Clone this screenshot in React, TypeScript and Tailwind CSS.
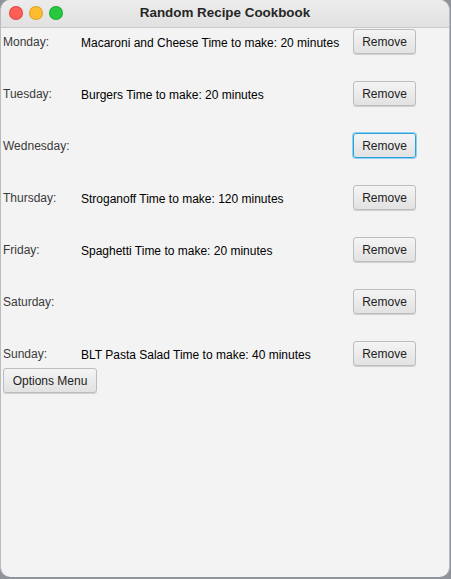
import React from "react";

const rows: { day: string; recipe: string; focused?: boolean }[] = [
  { day: "Monday:", recipe: "Macaroni and Cheese Time to make: 20 minutes" },
  { day: "Tuesday:", recipe: "Burgers Time to make: 20 minutes" },
  { day: "Wednesday:", recipe: "", focused: true },
  { day: "Thursday:", recipe: "Stroganoff Time to make: 120 minutes" },
  { day: "Friday:", recipe: "Spaghetti Time to make: 20 minutes" },
  { day: "Saturday:", recipe: "" },
  { day: "Sunday:", recipe: "BLT Pasta Salad Time to make: 40 minutes" },
];

function FxButton({ label, focused, className }: { label: string; focused?: boolean; className?: string }) {
  return (
    <div
      className={
        "flex h-[25px] items-center justify-center rounded-[3px] border bg-gradient-to-b from-[#f4f4f4] to-[#e2e2e2] text-[12px] text-[#222] " +
        (focused
          ? "border-[#2a9fd8] shadow-[0_0_0_1px_#8fd0f0] "
          : "border-[#bdbdbd] shadow-[0_1px_0_#d0d0d0] ") +
        (className ?? "")
      }
    >
      {label}
    </div>
  );
}

export default function App() {
  return (
    <div
      className="h-[579px] w-[451px] overflow-hidden bg-[#8f939a]"
      style={{ fontFamily: '"Liberation Sans", Arial, sans-serif' }}
    >
      <div className="flex h-[577px] w-[450px] flex-col overflow-hidden rounded-[10px] border-l border-r border-[#b9bcc0] bg-[#f3f3f3]">
        <div className="relative flex h-[28px] shrink-0 items-center justify-center border-b border-[#c9c9c9] bg-gradient-to-b from-[#ececec] to-[#e1e1e1]">
          <div className="absolute left-[9px] top-[7px] flex gap-[8px]">
            <div className="h-[12px] w-[12px] rounded-full bg-[#fe5f57] ring-1 ring-[#e0443e]" />
            <div className="h-[12px] w-[12px] rounded-full bg-[#febc2e] ring-1 ring-[#dea123]" />
            <div className="h-[12px] w-[12px] rounded-full bg-[#28c840] ring-1 ring-[#1aab29]" />
          </div>
          <span className="text-[13.4px] font-bold text-[#262626]">Random Recipe Cookbook</span>
        </div>
        <div className="flex flex-col">
          {rows.map((r, i) => (
            <div
              key={r.day}
              className={
                "grid grid-cols-[80px_272px_63px] items-start " + (i === rows.length - 1 ? "h-[27px]" : "h-[52px]")
              }
            >
              <div className="whitespace-nowrap pl-[2px] pt-[6px] text-[12px] leading-[16px] text-[#3a3a3a]">{r.day}</div>
              <div className="whitespace-nowrap pt-[7px] text-[12px] leading-[16px] text-black">{r.recipe}</div>
              <FxButton label="Remove" focused={r.focused} className="mt-[1px]" />
            </div>
          ))}
          <FxButton label="Options Menu" className="ml-[2px] mt-[1px] w-[94px]" />
        </div>
      </div>
    </div>
  );
}
